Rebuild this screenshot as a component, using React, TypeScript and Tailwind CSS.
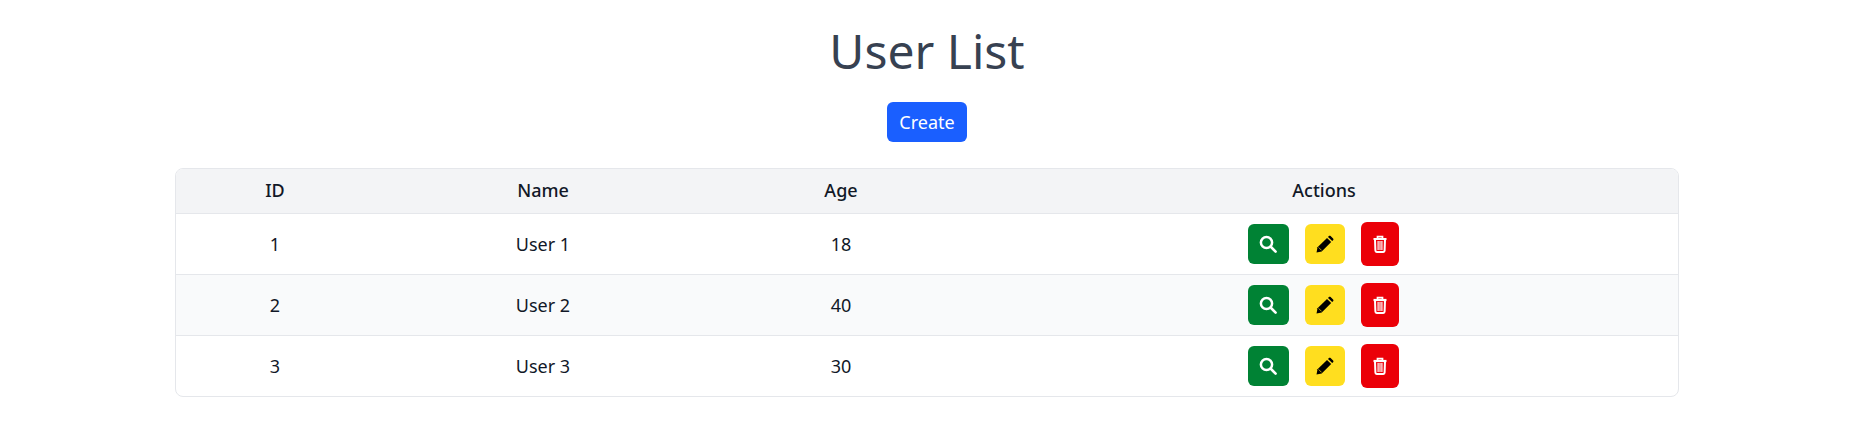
import React from 'react';

const users = [
  { id: 1, name: 'User 1', age: 18 },
  { id: 2, name: 'User 2', age: 40 },
  { id: 3, name: 'User 3', age: 30 },
];

const SearchIcon = () => (
  <svg viewBox="0 0 18 18" className="size-[18px]" fill="none" stroke="currentColor">
    <circle cx="7.5" cy="7.5" r="5.6" strokeWidth="2.5" />
    <path d="M12 12l4.6 4.6" strokeWidth="2.6" strokeLinecap="round" />
  </svg>
);

const PencilIcon = () => (
  <svg viewBox="0 0 18 18" className="size-[18px]" fill="currentColor">
    <path d="M0.5 17.5l1-5.2L11 2.9l4.2 4.2-9.5 9.4z" />
    <path d="M12 1.9l.9-.9c.5-.5 1.2-.5 1.7 0l2.5 2.5c.5.5.5 1.2 0 1.7l-.9.9z" />
    <path d="M2.6 12.4l3 3" stroke="#ffde1f" strokeWidth="0.7" />
  </svg>
);

const TrashIcon = () => (
  <svg viewBox="0 0 16 18" className="h-[18px] w-[16px]" fill="none" stroke="currentColor">
    <path d="M1.5 4h13" strokeWidth="2.2" />
    <path d="M5.5 4V1.6h5V4" strokeWidth="1.7" />
    <path d="M3 4.5l.4 11c0 .9.5 1.4 1.3 1.4h6.6c.8 0 1.3-.5 1.3-1.4l.4-11" strokeWidth="2" />
    <path d="M6.1 6v9M8 6v9M9.9 6v9" strokeWidth="1.2" />
  </svg>
);

const App: React.FC = () => {
  return (
    <div className="min-h-[448px] bg-white pt-[19px] font-['Noto_Sans',sans-serif] text-[18px] text-[#111827]">
      <h1 className="text-center text-[48px] leading-[64px] text-[#374151]">User List</h1>
      <div className="mt-[19px] flex justify-center">
        <button className="h-[40px] w-[80px] rounded-md bg-[#1a5fff] text-[18px] text-white">Create</button>
      </div>
      <div className="mx-[175px] mt-[26px] overflow-hidden rounded-lg border border-[#e5e7eb]">
        <table className="w-full table-fixed border-collapse text-center">
          <thead>
            <tr className="h-[44px] border-b border-[#e5e7eb] bg-[#f3f4f6]">
              <th className="w-[198px] font-medium">ID</th>
              <th className="w-[338px] font-medium">Name</th>
              <th className="w-[258px] font-medium">Age</th>
              <th className="font-medium">Actions</th>
            </tr>
          </thead>
          <tbody>
            {users.map((user) => (
              <tr key={user.id} className="h-[61px] border-b border-[#e5e7eb] last:border-b-0 even:bg-[#f9fafb]">
                <td className="pt-[1px]">{user.id}</td>
                <td className="pt-[1px]">{user.name}</td>
                <td className="pt-[1px]">{user.age}</td>
                <td>
                  <div className="flex items-center justify-center pr-[2px]">
                    <button className="flex h-[40px] w-[41px] items-center justify-center rounded-md bg-[#008234] text-white">
                      <SearchIcon />
                    </button>
                    <button className="ml-[16px] flex h-[40px] w-[40px] items-center justify-center rounded-md bg-[#ffde1f] text-black">
                      <PencilIcon />
                    </button>
                    <button className="ml-[16px] flex h-[44px] w-[38px] items-center justify-center rounded-md bg-[#eb0008] text-white">
                      <TrashIcon />
                    </button>
                  </div>
                </td>
              </tr>
            ))}
          </tbody>
        </table>
      </div>
    </div>
  );
};

export default App;
